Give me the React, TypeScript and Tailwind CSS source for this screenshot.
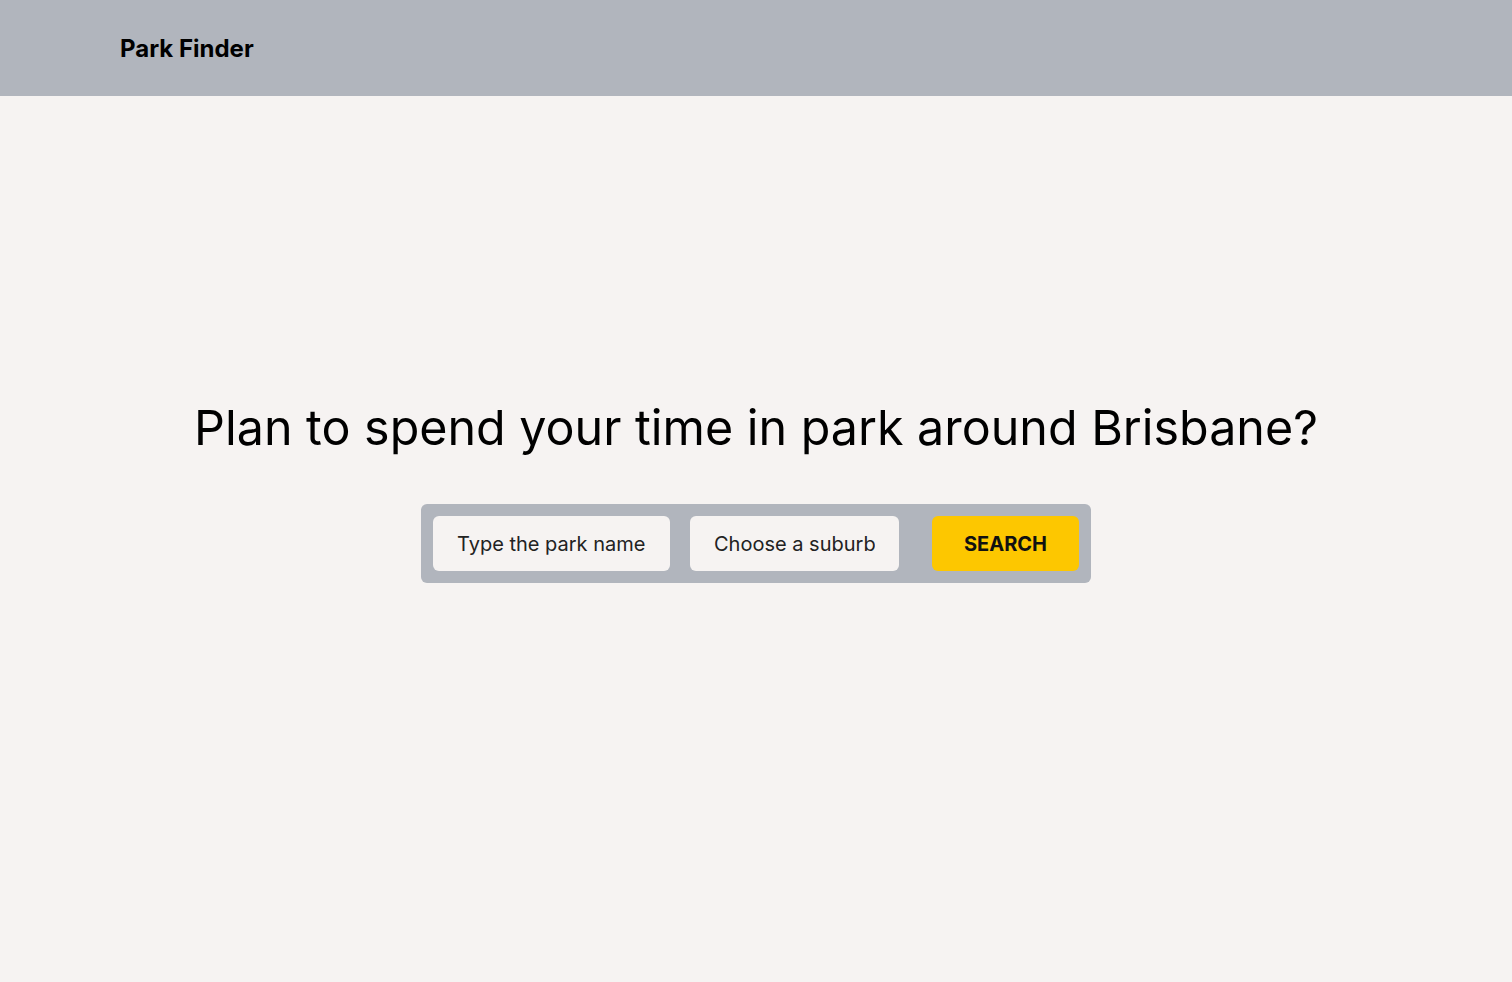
import { useState } from 'react';

export default function App() {
  const [park, setPark] = useState('');
  const [suburb, setSuburb] = useState('');

  return (
    <div className="min-h-screen bg-[#f6f3f2] font-['Inter',sans-serif] text-black">
      <header className="flex h-[96px] items-center bg-[#b1b5bd] px-[120px] pt-[2px]">
        <h1 className="text-[24px] font-bold leading-none">Park Finder</h1>
      </header>

      <main className="flex flex-col items-center pt-[303px]">
        <h2 className="text-[48.4px] leading-[58px] font-normal">
          Plan to spend your time in park around Brisbane?
        </h2>

        <div className="mt-[47px] flex items-center rounded-[6px] bg-[#b1b5bd] p-[12px]">
          <input
            value={park}
            onChange={(e) => setPark(e.target.value)}
            placeholder="Type the park name"
            className="h-[55px] w-[237px] rounded-[6px] bg-[#f6f3f2] px-[24px] text-[20px] text-[#222] placeholder:text-[#222] focus:outline-none"
          />
          <input
            value={suburb}
            onChange={(e) => setSuburb(e.target.value)}
            placeholder="Choose a suburb"
            className="ml-[20px] h-[55px] w-[209px] rounded-[6px] bg-[#f6f3f2] px-[24px] text-[20px] text-[#222] placeholder:text-[#222] focus:outline-none"
          />
          <button className="ml-[33px] h-[55px] w-[147px] rounded-[6px] bg-[#fdc700] text-[20px] font-bold text-[#111]">
            SEARCH
          </button>
        </div>
      </main>
    </div>
  );
}
